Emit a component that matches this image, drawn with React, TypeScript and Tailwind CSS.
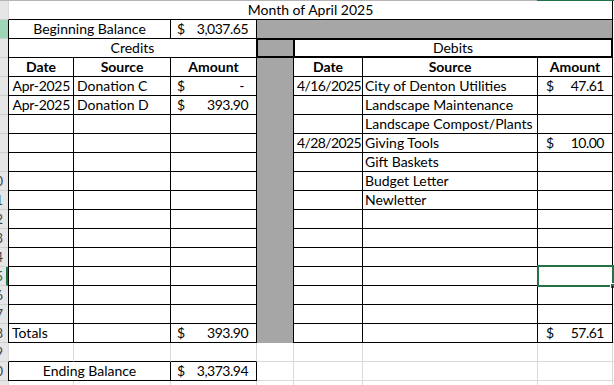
import React from "react";

type CP = { className: string; children?: React.ReactNode };

const Cell = ({ className, children }: CP) => (
  <div
    className={
      "h-[19px] shrink-0 flex items-center overflow-hidden whitespace-nowrap leading-[18px] " +
      className
    }
  >
    {children}
  </div>
);

const Money = ({ v }: { v: string }) => (
  <>
    <span>$</span>
    <span className="tracking-[-0.5px]">{v}</span>
  </>
);

const RowHead = ({ n, kind }: { n: number; kind?: "sel" | "act" }) => {
  const bg = kind === "sel" ? "bg-[#9fd5b7]" : "bg-[#e6e6e6]";
  const act =
    kind === "act"
      ? " border-r-2 border-r-[#217346] text-[#217346]"
      : " text-[#444444]";
  return (
    <div
      className={
        "h-[19px] w-[8px] shrink-0 overflow-hidden flex justify-end items-center border-b border-b-[#cfcfcf] " +
        bg +
        act
      }
    >
      {n >= 10 && (
        <span
          className={
            (kind === "act" ? "pr-[3px]" : "pr-[5px]") +
            " text-[13px] leading-none whitespace-nowrap"
          }
        >
          {n}
        </span>
      )}
    </div>
  );
};

const Row = ({
  n,
  kind,
  children,
}: {
  n: number;
  kind?: "sel" | "act";
  children?: React.ReactNode;
}) => (
  <div className="flex h-[19px] shrink-0">
    <RowHead n={n} kind={kind} />
    {children}
  </div>
);

const credits: string[][] = [
  ["Apr-2025", "Donation C", "-"],
  ["Apr-2025", "Donation D", "393.90"],
];

const debits: string[][] = [
  ["4/16/2025", "City of Denton Utilities", "47.61"],
  ["", "Landscape Maintenance", ""],
  ["", "Landscape Compost/Plants", ""],
  ["4/28/2025", "Giving Tools", "10.00"],
  ["", "Gift Baskets", ""],
  ["", "Budget Letter", ""],
  ["", "Newletter", ""],
];

const X = () => <Cell className="w-[1px] border-b border-[#d9d9d9]" />;

export default function App() {
  const dataRows = Array.from({ length: 13 }, (_, i) => i);
  return (
    <div className="w-[614px] h-[385px] overflow-hidden bg-white text-black text-[14px] [font-family:Lato,sans-serif]">
      <div className="flex h-[1px]">
        <div className="w-[537px] bg-[#b4b4b4]" />
        <div className="w-[77px] bg-[#217346]" />
      </div>

      {/* Row 1 */}
      <Row n={1}>
        <Cell className="w-[605px] justify-center border-l border-l-[#d9d9d9] border-r border-b border-r-black border-b-black">
          Month of April 2025
        </Cell>
        <X />
      </Row>

      {/* Row 2 */}
      <Row n={2} kind="sel">
        <Cell className="w-[163px] justify-center border-l border-r border-b border-black">
          Beginning Balance
        </Cell>
        <Cell className="w-[86px] justify-between pl-[6px] pr-[8px] border-r border-b border-black">
          <Money v="3,037.65" />
        </Cell>
        <Cell className="w-[356px] bg-[#a6a6a6] border-r border-b border-black" />
        <X />
      </Row>

      {/* Row 3 */}
      <Row n={3}>
        <Cell className="w-[249px] justify-center border-l border-r border-b border-black">
          Credits
        </Cell>
        <Cell className="w-[37px] bg-[#a6a6a6] border-l border-t border-r border-b-2 border-black" />
        <Cell className="w-[319px] justify-center border-l border-t border-r-2 border-b-2 border-black">
          Debits
        </Cell>
        <X />
      </Row>

      {/* Row 4 */}
      <Row n={4}>
        <Cell className="w-[66px] justify-center font-bold border-l border-r border-b border-black">
          Date
        </Cell>
        <Cell className="w-[97px] justify-center font-bold border-r border-b border-black">
          Source
        </Cell>
        <Cell className="w-[86px] justify-center font-bold border-r border-b border-black">
          Amount
        </Cell>
        <Cell className="w-[37px] bg-[#a6a6a6] border-r border-black" />
        <Cell className="w-[69px] justify-center font-bold border-r border-b border-black">
          Date
        </Cell>
        <Cell className="w-[175px] justify-center font-bold border-r border-b border-black">
          Source
        </Cell>
        <Cell className="w-[75px] justify-center font-bold border-r border-b border-black">
          Amount
        </Cell>
        <X />
      </Row>

      {/* Rows 5-17 */}
      {dataRows.map((i) => {
        const n = i + 5;
        const c = credits[i] || ["", "", ""];
        const d = debits[i] || ["", "", ""];
        return (
          <Row key={n} n={n} kind={n === 15 ? "act" : undefined}>
            <Cell className="w-[66px] justify-end pr-[3px] tracking-[-0.3px] border-l border-r border-b border-black">
              {c[0]}
            </Cell>
            <Cell className="w-[97px] pl-[3px] border-r border-b border-black">
              {c[1]}
            </Cell>
            <Cell
              className={
                "w-[86px] justify-between pl-[6px] border-r border-b border-black " +
                (c[2] === "-" ? "pr-[12px]" : "pr-[8px]")
              }
            >
              {c[2] !== "" && <Money v={c[2]} />}
            </Cell>
            <Cell className="w-[37px] bg-[#a6a6a6] border-r border-black" />
            <Cell className="w-[69px] justify-end pr-[1px] tracking-[-0.6px] border-r border-b border-black">
              {d[0]}
            </Cell>
            <Cell className="w-[175px] pl-[2px] border-r border-b border-black">
              {d[1]}
            </Cell>
            <div className="relative shrink-0">
              <Cell className="w-[75px] justify-between pl-[8px] pr-[8px] border-r border-b border-black">
                {d[2] !== "" && <Money v={d[2]} />}
              </Cell>
              {n === 15 && (
                <>
                  <div className="absolute -top-[2px] -left-[1px] -right-[1px] -bottom-[1px] border-2 border-[#217346]" />
                  <div className="absolute -right-[3px] -bottom-[3px] w-[6px] h-[6px] bg-[#217346] border border-white" />
                </>
              )}
            </div>
            <X />
          </Row>
        );
      })}

      {/* Row 18 Totals */}
      <Row n={18}>
        <Cell className="w-[66px] pl-[3px] border-l border-r border-b border-black">
          Totals
        </Cell>
        <Cell className="w-[97px] border-r border-b border-black" />
        <Cell className="w-[86px] justify-between pl-[6px] pr-[8px] border-r border-b border-black">
          <Money v="393.90" />
        </Cell>
        <Cell className="w-[37px] bg-[#a6a6a6] border-r border-black" />
        <Cell className="w-[69px] border-r border-b border-black" />
        <Cell className="w-[175px] border-r border-b border-black" />
        <Cell className="w-[75px] justify-between pl-[8px] pr-[8px] border-r border-b border-black">
          <Money v="57.61" />
        </Cell>
        <X />
      </Row>

      {/* Row 19 */}
      <Row n={19}>
        <Cell className="w-[66px] border-l border-l-[#d9d9d9] border-r border-r-[#d9d9d9] border-b border-b-black" />
        <Cell className="w-[97px] border-r border-r-[#d9d9d9] border-b border-b-black" />
        <Cell className="w-[86px] border-r border-r-[#d9d9d9] border-b border-b-black" />
        <Cell className="w-[37px] border-r border-b border-[#d9d9d9]" />
        <Cell className="w-[69px] border-r border-b border-[#d9d9d9]" />
        <Cell className="w-[175px] border-r border-b border-[#d9d9d9]" />
        <Cell className="w-[75px] border-r border-b border-[#d9d9d9]" />
        <X />
      </Row>

      {/* Row 20 */}
      <Row n={20}>
        <Cell className="w-[163px] justify-center border-l border-r border-b border-black">
          Ending Balance
        </Cell>
        <Cell className="w-[86px] justify-between pl-[6px] pr-[8px] border-r border-b border-black">
          <Money v="3,373.94" />
        </Cell>
        <Cell className="w-[37px] border-r border-b border-[#d9d9d9]" />
        <Cell className="w-[69px] border-r border-b border-[#d9d9d9]" />
        <Cell className="w-[175px] border-r border-b border-[#d9d9d9]" />
        <Cell className="w-[75px] border-r border-b border-[#d9d9d9]" />
        <X />
      </Row>

      {/* Row 21 */}
      <Row n={21}>
        <Cell className="w-[66px] border-l border-r border-b border-[#d9d9d9]" />
        <Cell className="w-[97px] border-r border-b border-[#d9d9d9]" />
        <Cell className="w-[86px] border-r border-b border-[#d9d9d9]" />
        <Cell className="w-[37px] border-r border-b border-[#d9d9d9]" />
        <Cell className="w-[69px] border-r border-b border-[#d9d9d9]" />
        <Cell className="w-[175px] border-r border-b border-[#d9d9d9]" />
        <Cell className="w-[75px] border-r border-b border-[#d9d9d9]" />
        <X />
      </Row>
    </div>
  );
}
